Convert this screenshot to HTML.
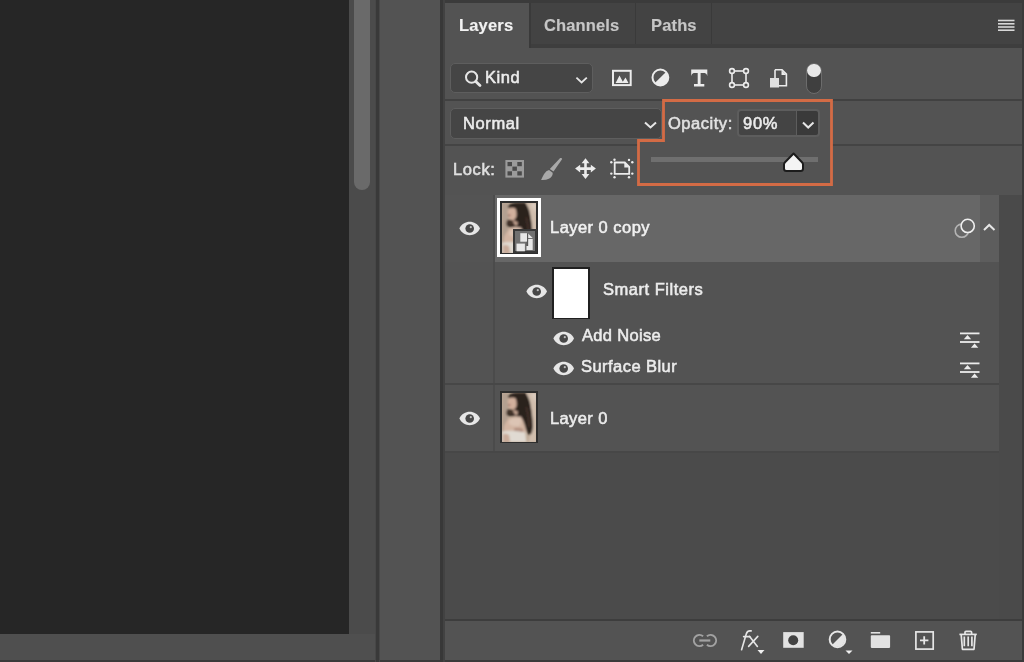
<!DOCTYPE html>
<html><head><meta charset="utf-8">
<style>
*{margin:0;padding:0;box-sizing:border-box}
html,body{width:1024px;height:662px;overflow:hidden;background:#535353}
body{position:relative;font-family:"Liberation Sans",sans-serif;color:#e8e8e8}
.a{position:absolute}
.t{position:absolute;white-space:nowrap;line-height:1;-webkit-font-smoothing:antialiased;will-change:transform;-webkit-text-stroke:0.55px currentColor}
</style></head><body>
<svg width="0" height="0" style="position:absolute"><defs>
<filter id="bl" x="-20%" y="-20%" width="140%" height="140%"><feGaussianBlur stdDeviation="1.1"/></filter>
<symbol id="photo" viewBox="0 0 34 49" preserveAspectRatio="none">
 <rect width="34" height="49" fill="#bfab98"/>
 <g filter="url(#bl)">
  <rect x="0" y="0" width="6" height="49" fill="#b3a091"/>
  <path d="M24 0 H34 V49 H26 Q30 36 29.5 20 Q28 8 24 0 Z" fill="#d0bead"/>
  <path d="M28 0 H34 V10 Q31 7 28 0 Z" fill="#dacbbe"/>
  <path d="M2 33 Q5 25 12 23 Q19 21 22 25 Q24 32 23 38 L22 44 L3 44 Q1 38 2 33 Z" fill="#d2b5a3"/>
  <path d="M7 27 Q12 24 18 25 Q20 29 17 33 Q11 34 7 31 Z" fill="#dcc4b4"/>
  <path d="M12 35 Q17 34 21 36 L20 40 L12 40 Z" fill="#b39080"/>
  <path d="M0 38.5 Q11 36.5 23 39.5 L24 49 H0 Z" fill="#e0dad2"/>
  <path d="M1 41 Q4 40 7 42 L8 49 H1 Z" fill="#c9ab9a"/>
  <path d="M5.5 3 Q9 -0.5 15 -0.5 H23 Q27 5 28 12 Q29.5 20 30 27 Q31 34 29.5 39 Q28.5 42.5 26 42 Q23.5 37 22 31 Q20.5 26 18.5 23.5 Q16 23.5 13.5 23 Q8.5 24 5 22.5 Q3.5 19 5.5 16.5 Q9 16.5 11.5 14.5 Q13.8 10 13.5 6 Q10.5 4.2 7 5.5 Z" fill="#2c211c"/><path d="M24 14 Q26.5 24 27 34" stroke="#4b3930" stroke-width="1.2" fill="none"/>
  <path d="M5 16 Q10 18.5 15 17 Q12.5 22 8 22 Q4.5 20 5 16 Z" fill="#45342c"/>
  <path d="M7.2 5.2 Q10.6 3.6 13.4 5.6 Q14.8 9 14.4 12.4 Q13.8 15.6 11.4 16.6 Q8.6 17.2 7 14.8 Q5.6 12 5.7 8.8 Q6 6.6 7.2 5.2 Z" fill="#d2b09d"/>
  <path d="M11 16 Q13 18 15.5 18.3 Q16 21 14 22.5 Q12 21 11 18 Z" fill="#c6a593"/>
  <ellipse cx="7.2" cy="12" rx="1.2" ry="0.8" fill="#8c5650"/>
 </g>
</symbol>
</defs></svg>
<!-- canvas -->
<div class="a" style="left:0;top:0;width:349px;height:634px;background:#262626"></div>
<div class="a" style="left:0;top:634px;width:375px;height:28px;background:#4f4f4f"></div>
<div class="a" style="left:0;top:659.6px;width:445px;height:2.4px;background:#3a3a3a"></div>
<!-- scrollbar column -->
<div class="a" style="left:349px;top:0;width:26px;height:634px;background:#4b4b4b"></div>
<div class="a" style="left:354px;top:-10px;width:16px;height:200px;background:#6a6a6a;border-radius:0 0 8px 8px"></div>
<div class="a" style="left:375px;top:0;width:5px;height:662px;background:#474747"></div><div class="a" style="left:376.3px;top:0;width:3.2px;height:662px;background:#393939"></div>
<!-- middle column -->
<div class="a" style="left:380px;top:0;width:60px;height:659.6px;background:#535353"></div>
<div class="a" style="left:440px;top:0;width:5px;height:662px;background:#424242"></div><div class="a" style="left:440px;top:0;width:2.6px;height:662px;background:#383838"></div>

<!-- panel -->
<div class="a" style="left:445px;top:0;width:579px;height:3px;background:#3b3b3b"></div>
<div class="a" style="left:445px;top:3px;width:577px;height:45px;background:#434343"></div>
<div class="a" style="left:445px;top:3px;width:84px;height:46px;background:#535353"></div>
<div class="a" style="left:529px;top:3px;width:2px;height:45px;background:#3a3a3a"></div>
<div class="a" style="left:635px;top:3px;width:1px;height:45px;background:#3a3a3a"></div>
<div class="a" style="left:711px;top:3px;width:1px;height:45px;background:#3a3a3a"></div>
<div class="a" style="left:531px;top:44px;width:491px;height:4px;background:#3e3e3e"></div>
<div class="a" style="left:1022px;top:0;width:2px;height:662px;background:#3a3a3a"></div>
<div class="t" style="left:459.3px;top:16.6px;font-size:16.5px;letter-spacing:0.18px;color:#f2f2f2;font-weight:bold;-webkit-text-stroke:0.15px currentColor">Layers</div>
<div class="t" style="left:544.3px;top:16.6px;font-size:16.5px;letter-spacing:0.14px;color:#c6c6c6;font-weight:bold;-webkit-text-stroke:0.15px currentColor">Channels</div>
<div class="t" style="left:650.6px;top:16.8px;font-size:16.5px;letter-spacing:0.15px;color:#c6c6c6;font-weight:bold;-webkit-text-stroke:0.15px currentColor">Paths</div>
<!-- menu icon -->
<svg class="a" style="left:996px;top:18px" width="20" height="16"><g stroke="#d8d8d8" stroke-width="1.6"><line x1="2" y1="2.5" x2="18.5" y2="2.5"/><line x1="2" y1="5.8" x2="18.5" y2="5.8"/><line x1="2" y1="9" x2="18.5" y2="9"/><line x1="2" y1="12.2" x2="18.5" y2="12.2"/></g></svg>

<!-- separators -->
<div class="a" style="left:445px;top:99px;width:577px;height:2px;background:#414141"></div>
<div class="a" style="left:445px;top:144px;width:577px;height:2px;background:#444444"></div>


<!-- FILTER ROW -->
<div class="a" style="left:450px;top:62.6px;width:143px;height:30.8px;border:1.8px solid #5e5e5e;border-radius:5px;background:#454545"></div>
<svg class="a" style="left:462px;top:68px" width="24" height="22"><circle cx="9.6" cy="9.2" r="5.6" fill="none" stroke="#e6e6e6" stroke-width="2"/><line x1="13.8" y1="13.4" x2="18" y2="17.6" stroke="#e6e6e6" stroke-width="2.8" stroke-linecap="round"/></svg>
<div class="t" style="left:485.4px;top:69.4px;font-size:16.5px;letter-spacing:0.53px;color:#ececec">Kind</div>
<svg class="a" style="left:572px;top:72px" width="20" height="16"><polyline points="4.4,5.6 9.6,10.5 14.8,5.6" fill="none" stroke="#e6e6e6" stroke-width="1.8"/></svg>
<!-- image icon -->
<svg class="a" style="left:610px;top:67px" width="24" height="22"><rect x="3" y="3.8" width="17.7" height="14.3" fill="none" stroke="#ececec" stroke-width="2"/><path d="M5.6 16 L9.5 8.5 L13.5 16 Z M12 16 L15.5 10.5 L18.5 16 Z" fill="#ececec"/></svg>
<!-- adjustment icon -->
<svg class="a" style="left:650px;top:67px" width="22" height="22"><circle cx="10.4" cy="10.5" r="7.9" fill="none" stroke="#ececec" stroke-width="2"/><path d="M16 4.9 A7.9 7.9 0 0 1 4.8 16.1 Z" fill="#ececec"/></svg>
<!-- T icon -->
<svg class="a" style="left:689px;top:67px" width="22" height="22"><path d="M2.2 2.6 H18.3 V9 Q17.9 6.1 15.8 5.9 H11.6 V16.9 H15.3 V19.4 H5 V16.9 H8.7 V5.9 H4.7 Q2.6 6.1 2.2 9 Z" fill="#ececec"/></svg>
<!-- shape icon -->
<svg class="a" style="left:727px;top:66px" width="24" height="24"><rect x="5" y="5" width="14" height="14" fill="none" stroke="#ececec" stroke-width="1.6"/><g fill="#535353" stroke="#ececec" stroke-width="1.6"><circle cx="5" cy="5" r="2.4"/><circle cx="19" cy="5" r="2.4"/><circle cx="5" cy="19" r="2.4"/><circle cx="19" cy="19" r="2.4"/></g></svg>
<!-- smart object icon -->
<svg class="a" style="left:767px;top:66px" width="24" height="24"><path d="M8 3.8 H15 L19.4 8.2 V19.8 H11" fill="none" stroke="#ececec" stroke-width="1.6"/><path d="M8 3.8 V12" fill="none" stroke="#ececec" stroke-width="1.6"/><path d="M14.5 4 V9 H19.2 Z" fill="#ececec"/><rect x="3" y="12" width="9" height="9.5" fill="#e0e0e0"/></svg>
<!-- toggle -->
<div class="a" style="left:806px;top:62.5px;width:16px;height:31px;border-radius:8px;border:1.6px solid #6c6c6c;background:#3f3f3f"></div>
<div class="a" style="left:807.3px;top:63.8px;width:13.5px;height:13.5px;border-radius:50%;background:#e8e8e8"></div>

<!-- POPUP -->
<svg class="a" style="left:630px;top:95px" width="210" height="95"><path d="M33.5 5.5 H201.5 V89.5 H8.5 V45.5 H33.5 Z" fill="#535353" stroke="#d36b45" stroke-width="2.8"/></svg>
<div class="a" style="left:651px;top:157.4px;width:167px;height:5px;background:#6f6f6f"></div>
<svg class="a" style="left:780px;top:148px" width="28" height="28"><path d="M13.6 5.5 L22 14.2 Q23 15.2 23 16.6 V20.5 Q23 23 20.5 23 H6.5 Q4 23 4 20.5 V16.6 Q4 15.2 5 14.2 Z" fill="#f4f4f4" stroke="#1c1c1c" stroke-width="2" stroke-linejoin="round"/></svg>

<!-- BLEND ROW -->
<div class="a" style="left:450px;top:107.8px;width:212px;height:31px;border:1.8px solid #5e5e5e;border-radius:5px;background:#454545"></div>
<div class="t" style="left:462.9px;top:115.0px;font-size:16.5px;letter-spacing:0.62px;color:#ececec">Normal</div>
<svg class="a" style="left:640px;top:117px" width="20" height="16"><polyline points="5,5.5 10.5,10.5 16,5.5" fill="none" stroke="#e6e6e6" stroke-width="2"/></svg>
<div class="t" style="left:668.4px;top:114.5px;font-size:16.5px;letter-spacing:0.53px;color:#e2e2e2">Opacity:</div>
<div class="a" style="left:737px;top:108.5px;width:83px;height:28px;border:2px solid #5d5d5d;border-radius:4px;background:#444"></div>
<div class="a" style="left:797px;top:110.5px;width:21px;height:24px;background:#3a3a3a;border-radius:0 3px 3px 0"></div>
<div class="a" style="left:795.5px;top:110.5px;width:1.5px;height:24px;background:#5d5d5d"></div>
<div class="t" style="left:742.7px;top:115.3px;font-size:16.5px;letter-spacing:0.7px;color:#ececec">90%</div>
<svg class="a" style="left:798px;top:117px" width="20" height="16"><polyline points="5,5.5 10.2,10.5 15.5,5.5" fill="none" stroke="#e6e6e6" stroke-width="2"/></svg>

<!-- LOCK ROW -->
<div class="t" style="left:453.2px;top:160.5px;font-size:16.5px;letter-spacing:0.6px;color:#e0e0e0">Lock:</div>
<svg class="a" style="left:504px;top:159px" width="22" height="20"><rect x="1.4" y="1" width="18.6" height="17.6" fill="#9b9b9b"/><g fill="#4a4a4a"><rect x="3.5" y="3" width="4.5" height="4.2"/><rect x="13.3" y="3" width="4.5" height="4.2"/><rect x="8.4" y="7.6" width="4.5" height="4.2"/><rect x="3.5" y="12.3" width="4.5" height="4.2"/><rect x="13.3" y="12.3" width="4.5" height="4.2"/></g></svg>
<svg class="a" style="left:536px;top:153px" width="32" height="32"><path d="M24.2 5.1 Q25.8 4.4 26.2 6.1 L17.5 18.5 L13.8 15.9 Z" fill="#a9a9a9"/><path d="M13 17.1 L16.7 19.8 Q16.9 23.4 13.4 25.5 Q9.4 27.4 5.1 27 Q6.4 23.8 8.1 20.9 Q10.2 17.6 13 17.1 Z" fill="#a9a9a9"/></svg>
<svg class="a" style="left:573px;top:157px" width="25" height="25"><path d="M12.5 1.2 L16.4 6.3 H13.8 V10.3 H17.8 V7.7 L22.9 11.6 L17.8 15.5 V12.9 H13.8 V16.9 H16.4 L12.5 22 L8.6 16.9 H11.2 V12.9 H7.2 V15.5 L2.1 11.6 L7.2 7.7 V10.3 H11.2 V6.3 H8.6 Z" fill="#ececec"/></svg>
<svg class="a" style="left:608px;top:155px" width="28" height="26"><path d="M6.7 7.5 H16.8 L21.2 11.9 V18.8 H6.7 Z" fill="none" stroke="#ececec" stroke-width="1.8"/><path d="M16.3 7.6 V12.4 H21.1 Z" fill="#ececec"/><g fill="#ececec"><circle cx="6.5" cy="4.7" r="1.2"/><circle cx="3.3" cy="7.3" r="1.2"/><circle cx="24.3" cy="7.3" r="1.2"/><circle cx="21" cy="4.9" r="1.2"/><circle cx="3.3" cy="18.6" r="1.2"/><circle cx="6.5" cy="22.2" r="1.2"/><circle cx="24.3" cy="18.6" r="1.2"/><circle cx="21" cy="22.2" r="1.2"/></g></svg>


<!-- LAYERS LIST -->
<div class="a" style="left:445px;top:194.5px;width:577px;height:425px;background:#4b4b4b"></div>
<div class="a" style="left:999px;top:194.5px;width:23px;height:425px;background:#4a4a4a"></div>
<!-- row 1 -->
<div class="a" style="left:445px;top:194.5px;width:554px;height:67px;background:#545454"></div>
<div class="a" style="left:495px;top:194.5px;width:485px;height:67px;background:#676767"></div>
<div class="a" style="left:980px;top:194.5px;width:19px;height:67px;background:#5d5d5d"></div>
<div class="a" style="left:493px;top:194.5px;width:2px;height:67px;background:#4c4c4c"></div>
<!-- smart filters block -->
<div class="a" style="left:445px;top:261.5px;width:554px;height:122px;background:#535353"></div>
<div class="a" style="left:493px;top:261.5px;width:1.5px;height:122px;background:#4b4b4b"></div>
<div class="a" style="left:445px;top:383.3px;width:554px;height:1.6px;background:#474747"></div>
<!-- layer 0 row -->
<div class="a" style="left:445px;top:385px;width:554px;height:67px;background:#535353"></div>
<div class="a" style="left:493px;top:385px;width:1.5px;height:67px;background:#4b4b4b"></div>
<div class="a" style="left:445px;top:451.3px;width:554px;height:2px;background:#474747"></div>


<!-- row1 content -->
<svg class="a" style="left:458px;top:221px" width="24" height="16"><path d="M1.4 7.5 C5.5 -1.4 17.9 -1.4 22 7.5 C17.9 16.4 5.5 16.4 1.4 7.5 Z" fill="#e6e6e6"/><circle cx="11.7" cy="7.5" r="4.3" fill="#474747"/><circle cx="12.8" cy="6.2" r="1.1" fill="#bdbdbd"/></svg>
<div class="a" style="left:496.8px;top:198.3px;width:44.7px;height:59.2px;background:#fff"></div>
<div class="a" style="left:499.8px;top:201.3px;width:38.7px;height:53.2px;background:#2e2e2e"></div>
<svg class="a" style="left:501.8px;top:202.6px" width="34.4" height="50.6"><use href="#photo" width="34.4" height="50.6"/></svg>
<div class="a" style="left:512.5px;top:229px;width:24.2px;height:24.3px;background:#383838"></div>
<div class="a" style="left:514.5px;top:231px;width:20.2px;height:20.3px;background:#707070"></div>
<svg class="a" style="left:512.5px;top:229px" width="26" height="26"><path d="M7.3 4.2 H14.1 V12.7 H7.3 Z" fill="#e8e8e8"/><path d="M15.1 4.5 L19.7 9 H15.1 Z" fill="#e8e8e8"/><path d="M15.1 10 H19.7 V21.1 H13.5 V17 H15.1 Z" fill="#e8e8e8"/><path d="M14.1 4.2 H15.1 V17 H13.6 V12.7 H14.1 Z" fill="#555"/><rect x="3.5" y="14.6" width="8.4" height="7.7" fill="#e8e8e8"/></svg>
<div class="t" style="left:550.1px;top:219.3px;font-size:16.5px;letter-spacing:0.46px;color:#f0f0f0">Layer 0 copy</div>
<svg class="a" style="left:952px;top:216px" width="26" height="26"><circle cx="9.8" cy="14.7" r="6.6" fill="none" stroke="#b4b4b4" stroke-width="1.6"/><circle cx="15.7" cy="9.9" r="6.6" fill="#676767" stroke="#f0f0f0" stroke-width="1.6"/></svg>
<svg class="a" style="left:980px;top:220px" width="18" height="14"><polyline points="4,10 9.2,5 14.5,10" fill="none" stroke="#e6e6e6" stroke-width="2"/></svg>

<!-- smart filters content -->
<svg class="a" style="left:525px;top:284px" width="24" height="16"><path d="M1.4 7.5 C5.5 -1.4 17.9 -1.4 22 7.5 C17.9 16.4 5.5 16.4 1.4 7.5 Z" fill="#e6e6e6"/><circle cx="11.7" cy="7.5" r="4.3" fill="#474747"/><circle cx="12.8" cy="6.2" r="1.1" fill="#bdbdbd"/></svg>
<div class="a" style="left:552px;top:267.4px;width:37.5px;height:52px;background:#202020"></div>
<div class="a" style="left:553.6px;top:269px;width:34.3px;height:48.8px;background:#fff"></div>
<div class="t" style="left:603.2px;top:280.7px;font-size:16.5px;letter-spacing:0.52px;color:#ececec">Smart Filters</div>
<svg class="a" style="left:552.2px;top:330.8px" width="24" height="16"><path d="M1.4 7.5 C5.5 -1.4 17.9 -1.4 22 7.5 C17.9 16.4 5.5 16.4 1.4 7.5 Z" fill="#e6e6e6"/><circle cx="11.7" cy="7.5" r="4.3" fill="#474747"/><circle cx="12.8" cy="6.2" r="1.1" fill="#bdbdbd"/></svg>
<div class="t" style="left:581.5px;top:326.8px;font-size:16.5px;letter-spacing:0.33px;color:#ececec">Add Noise</div>
<svg class="a" style="left:552.2px;top:361.2px" width="24" height="16"><path d="M1.4 7.5 C5.5 -1.4 17.9 -1.4 22 7.5 C17.9 16.4 5.5 16.4 1.4 7.5 Z" fill="#e6e6e6"/><circle cx="11.7" cy="7.5" r="4.3" fill="#474747"/><circle cx="12.8" cy="6.2" r="1.1" fill="#bdbdbd"/></svg>
<div class="t" style="left:581.0px;top:358.0px;font-size:16.5px;letter-spacing:0.45px;color:#ececec">Surface Blur</div>
<svg class="a" style="left:958px;top:329.6px" width="24" height="22"><g stroke="#ececec" stroke-width="1.8"><line x1="2" y1="3.4" x2="21.5" y2="3.4"/><line x1="2" y1="12" x2="21.5" y2="12"/></g><path d="M5.8 9.2 L9.5 5 L13.2 9.2 Z M12.9 17.8 L16.6 13.6 L20.3 17.8 Z" fill="#ececec"/></svg>
<svg class="a" style="left:958px;top:360px" width="24" height="22"><g stroke="#ececec" stroke-width="1.8"><line x1="2" y1="3.4" x2="21.5" y2="3.4"/><line x1="2" y1="12" x2="21.5" y2="12"/></g><path d="M5.8 9.2 L9.5 5 L13.2 9.2 Z M12.9 17.8 L16.6 13.6 L20.3 17.8 Z" fill="#ececec"/></svg>

<!-- layer 0 content -->
<svg class="a" style="left:458px;top:411px" width="24" height="16"><path d="M1.4 7.5 C5.5 -1.4 17.9 -1.4 22 7.5 C17.9 16.4 5.5 16.4 1.4 7.5 Z" fill="#e6e6e6"/><circle cx="11.7" cy="7.5" r="4.3" fill="#474747"/><circle cx="12.8" cy="6.2" r="1.1" fill="#bdbdbd"/></svg>
<div class="a" style="left:500.1px;top:391.1px;width:37.6px;height:52px;background:#2e2e2e"></div>
<svg class="a" style="left:501.6px;top:392.6px" width="34.6" height="49"><use href="#photo" width="34.6" height="49"/></svg>
<div class="t" style="left:549.7px;top:409.9px;font-size:16.5px;letter-spacing:0.38px;color:#ececec">Layer 0</div>

<!-- BOTTOM BAR -->
<div class="a" style="left:445px;top:619px;width:577px;height:2px;background:#3d3d3d"></div>
<div class="a" style="left:445px;top:621px;width:577px;height:39px;background:#535353"></div>
<div class="a" style="left:445px;top:659.5px;width:579px;height:2.5px;background:#3a3a3a"></div>
<svg class="a" style="left:688px;top:630px" width="32" height="20"><g fill="none" stroke="#a2a2a2" stroke-width="2"><path d="M15.1 6.2 A5.6 5.6 0 1 0 15.1 14.8"/><path d="M18.9 6.2 A5.6 5.6 0 1 1 18.9 14.8"/></g><line x1="11.3" y1="10.5" x2="22.3" y2="10.5" stroke="#a2a2a2" stroke-width="2.2"/></svg>
<svg class="a" style="left:736px;top:626px" width="26" height="26"><g fill="none" stroke="#e6e6e6" stroke-width="1.6" stroke-linecap="round"><path d="M5.6 23.8 L10.4 7.6 Q11.4 4.9 13.8 4.9 H15.2"/><path d="M7.6 10.6 H13.8"/><path d="M13.6 10.4 L21.4 20.4"/><path d="M21.8 10.4 L12.6 20.4"/></g></svg>
<svg class="a" style="left:756px;top:649px" width="10" height="6"><path d="M1.5 1 H8.5 L5 5 Z" fill="#f0f0f0"/></svg>
<svg class="a" style="left:782px;top:631px" width="24" height="19"><rect x="1.2" y="1.1" width="20.5" height="15.7" fill="#e2e2e2"/><circle cx="11.2" cy="9.2" r="5" fill="#424242"/></svg>
<svg class="a" style="left:826px;top:629px" width="22" height="22"><circle cx="11.5" cy="10.4" r="7.8" fill="none" stroke="#e6e6e6" stroke-width="2"/><path d="M17 4.9 A7.8 7.8 0 0 1 6 15.9 Z" fill="#e6e6e6"/></svg>
<svg class="a" style="left:844px;top:649px" width="10" height="6"><path d="M1.5 1.5 H8.5 L5 5 Z" fill="#f0f0f0"/></svg>
<svg class="a" style="left:868px;top:629px" width="25" height="22"><rect x="2.8" y="3" width="9.4" height="1.6" fill="#e2e2e2"/><rect x="2.8" y="6.3" width="19.3" height="12.6" rx="0.8" fill="#e2e2e2"/></svg>
<svg class="a" style="left:913px;top:629px" width="23" height="23"><rect x="2.9" y="2.9" width="17.3" height="17.2" fill="none" stroke="#e6e6e6" stroke-width="1.7"/><path d="M11.2 7.2 V15.6 M7 11.4 H15.4" stroke="#e6e6e6" stroke-width="1.8"/></svg>
<svg class="a" style="left:957px;top:628px" width="23" height="24"><g fill="none" stroke="#e6e6e6" stroke-width="1.7" stroke-linejoin="round"><path d="M2.4 6.4 H19.8"/><path d="M8 6 V4.2 Q8 3.3 9 3.3 H13.6 Q14.6 3.3 14.6 4.2 V6"/><path d="M4.2 6.6 L5.4 21.3 H17 L18.2 6.6"/><path d="M7.3 8.5 V18.2 M11.2 8.5 V18.2 M14.9 8.5 V18.2"/></g></svg>

</body></html>
